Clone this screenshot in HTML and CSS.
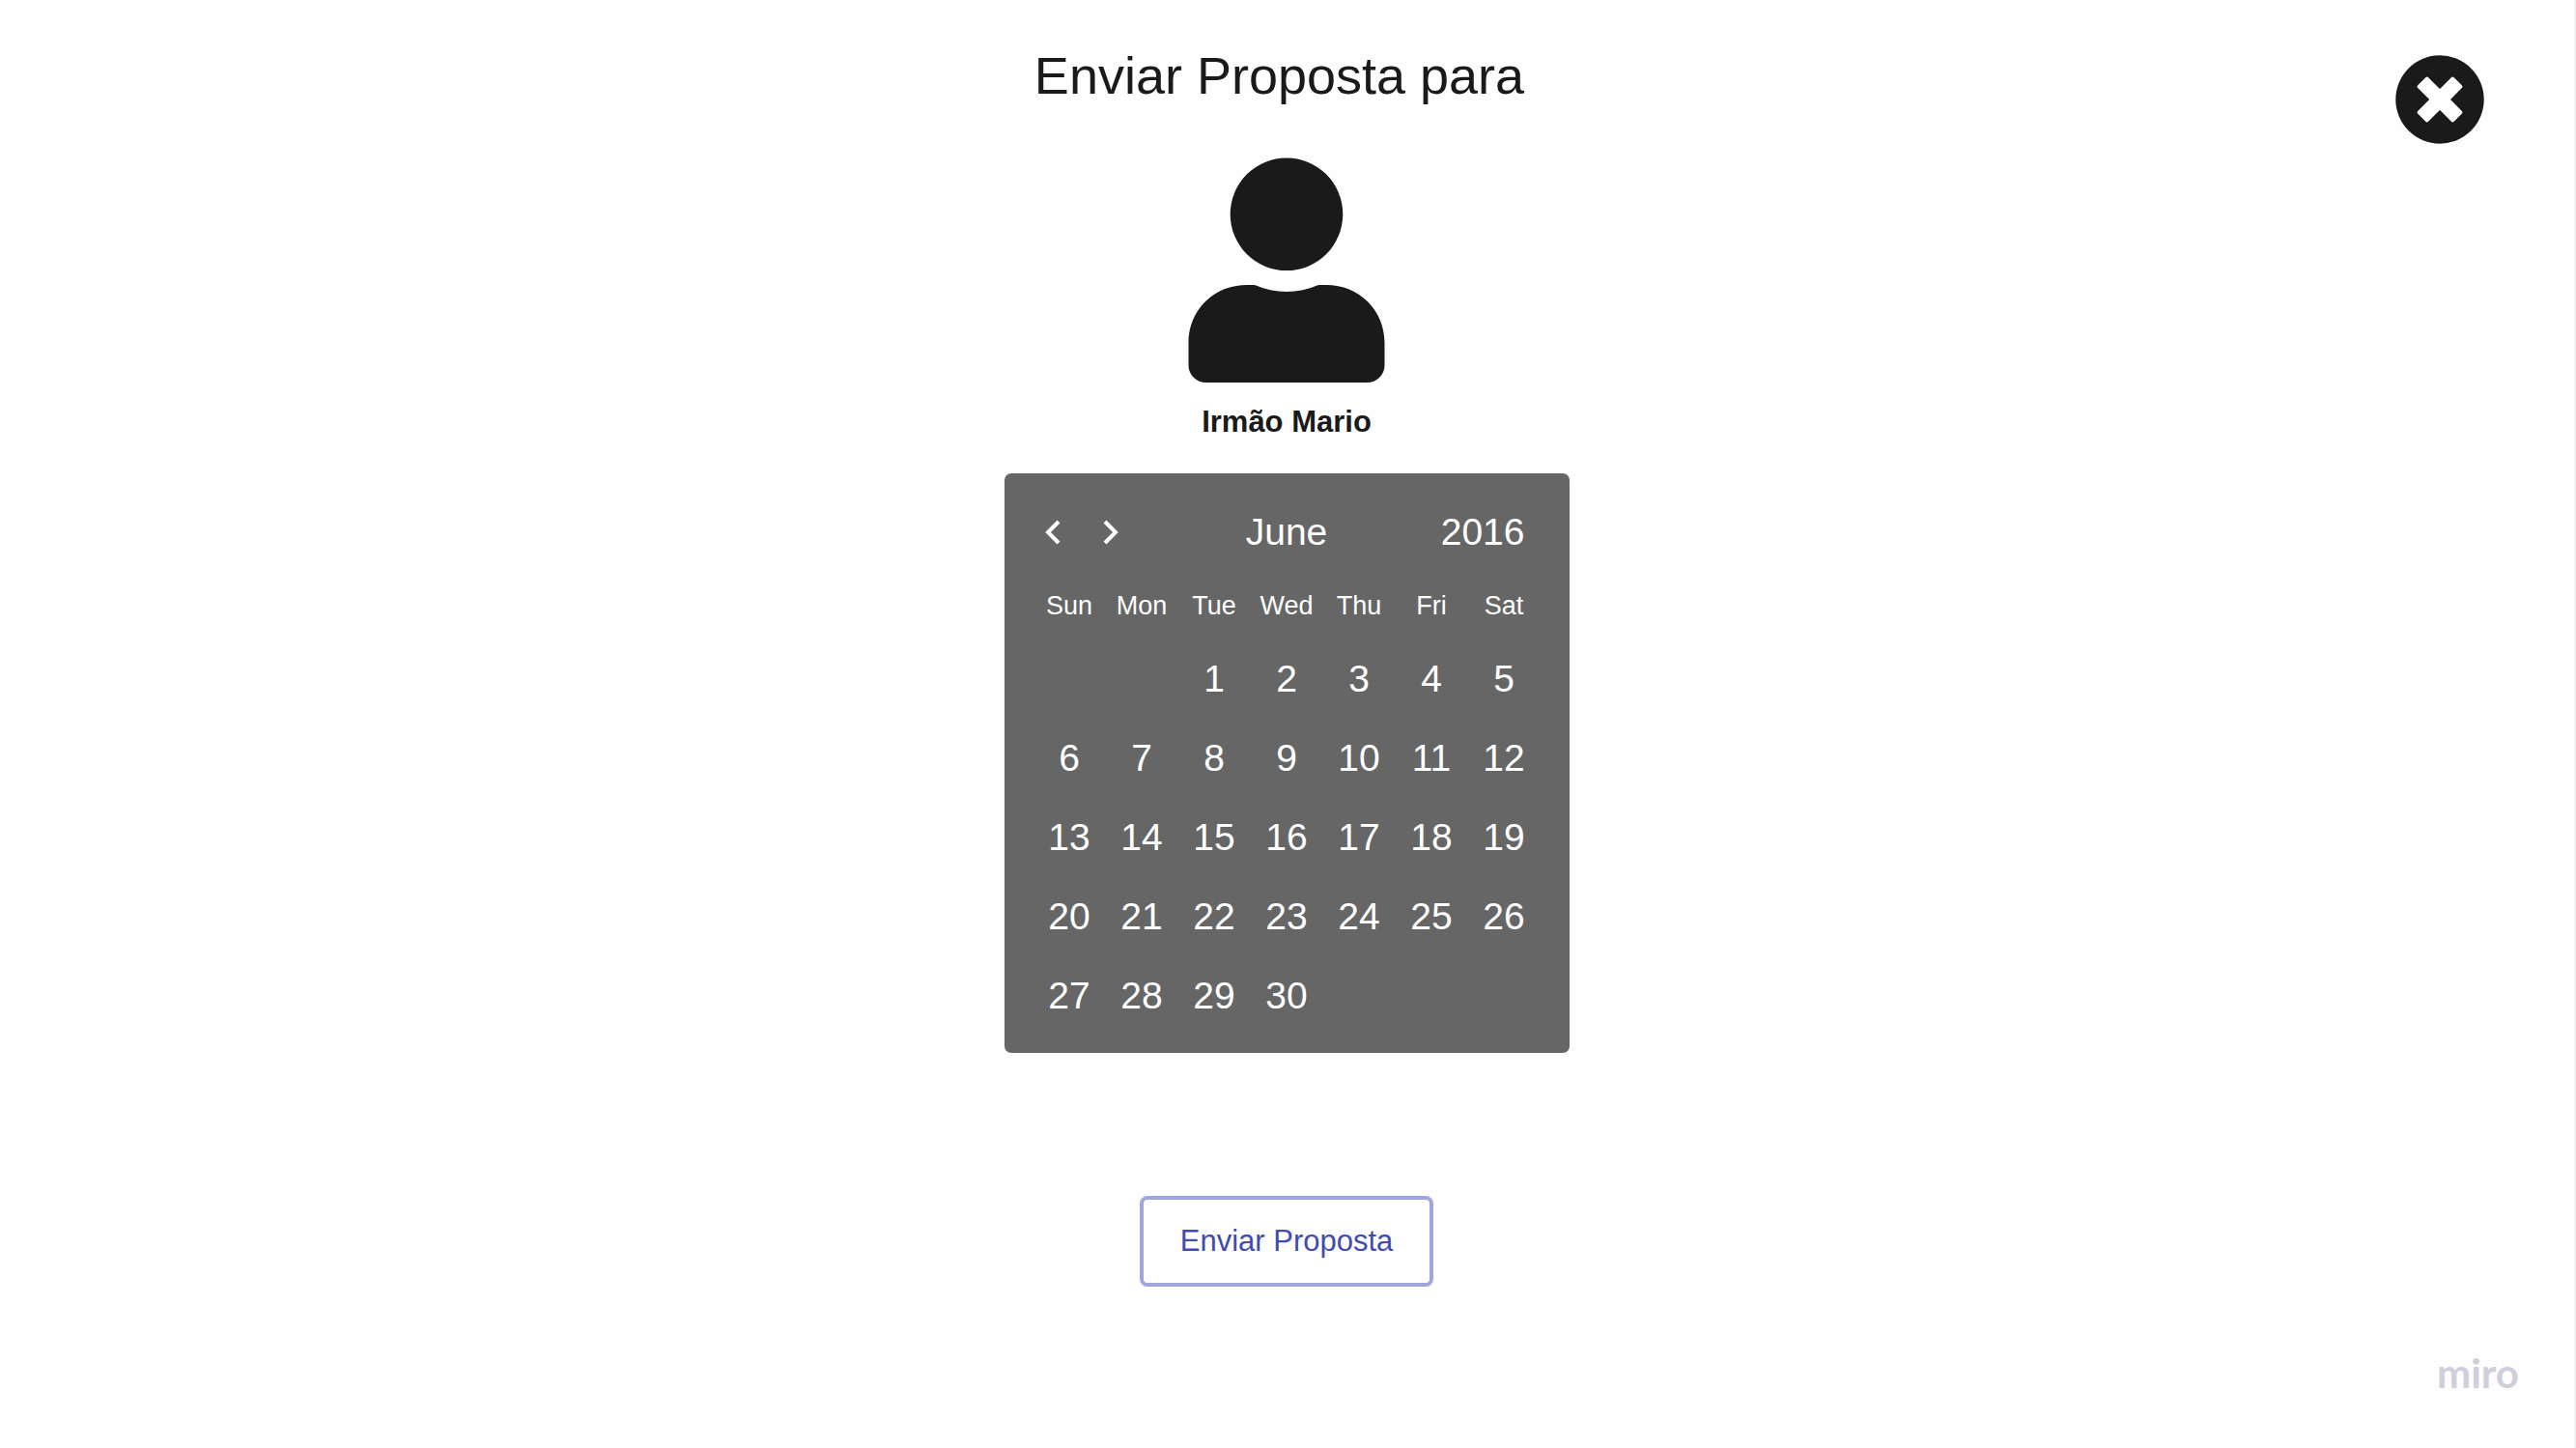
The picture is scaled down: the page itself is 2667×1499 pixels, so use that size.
FILE: index.html
```html
<!DOCTYPE html>
<html lang="pt">
<head>
<meta charset="utf-8">
<meta name="viewport" content="width=device-width, initial-scale=1">
<title>Enviar Proposta</title>
<link rel="stylesheet" href="styles.css">
</head>
<body>
<div class="page">
  <main class="proposal">
    <h1 class="title">Enviar Proposta para </h1>
    <svg class="avatar" viewBox="0 0 204 234" aria-hidden="true">
      <circle cx="102" cy="58.8" r="58.3"/>
      <path d="M0.500 192C0.500 158 27 132 61 132H69C90 141.300 114 141.300 135 132H143C177 132 203.500 158 203.500 192V215A18 18 0 0 1 185.500 233H18.500A18 18 0 0 1 0.500 215Z"/>
    </svg>
    <p class="name">Irmão Mario</p>

    <section class="calendar" aria-label="June 2016">
      <div class="calendar-head">
        <div class="arrows">
          <button class="arrow" type="button" aria-label="Previous month">
            <svg viewBox="0 0 16 26" aria-hidden="true"><path d="M14 2L3 13L14 24"/></svg>
          </button>
          <button class="arrow" type="button" aria-label="Next month">
            <svg viewBox="0 0 16 26" aria-hidden="true"><path d="M2 2L13 13L2 24"/></svg>
          </button>
        </div>
        <span class="month">June</span>
        <span class="year">2016</span>
      </div>
      <table class="days">
        <thead>
          <tr><th scope="col">Sun</th><th scope="col">Mon</th><th scope="col">Tue</th><th scope="col">Wed</th><th scope="col">Thu</th><th scope="col">Fri</th><th scope="col">Sat</th></tr>
        </thead>
        <tbody>
          <tr><td></td><td></td><td><button class="day" type="button">1</button></td><td><button class="day" type="button">2</button></td><td><button class="day" type="button">3</button></td><td><button class="day" type="button">4</button></td><td><button class="day" type="button">5</button></td></tr>
          <tr><td><button class="day" type="button">6</button></td><td><button class="day" type="button">7</button></td><td><button class="day" type="button">8</button></td><td><button class="day" type="button">9</button></td><td><button class="day" type="button">10</button></td><td><button class="day" type="button">11</button></td><td><button class="day" type="button">12</button></td></tr>
          <tr><td><button class="day" type="button">13</button></td><td><button class="day" type="button">14</button></td><td><button class="day" type="button">15</button></td><td><button class="day" type="button">16</button></td><td><button class="day" type="button">17</button></td><td><button class="day" type="button">18</button></td><td><button class="day" type="button">19</button></td></tr>
          <tr><td><button class="day" type="button">20</button></td><td><button class="day" type="button">21</button></td><td><button class="day" type="button">22</button></td><td><button class="day" type="button">23</button></td><td><button class="day" type="button">24</button></td><td><button class="day" type="button">25</button></td><td><button class="day" type="button">26</button></td></tr>
          <tr><td><button class="day" type="button">27</button></td><td><button class="day" type="button">28</button></td><td><button class="day" type="button">29</button></td><td><button class="day" type="button">30</button></td><td></td><td></td><td></td></tr>
        </tbody>
      </table>
    </section>

    <button class="send" type="submit">Enviar Proposta</button>
  </main>

  <button class="close" type="button" aria-label="Fechar">
    <svg viewBox="0 0 92 92" aria-hidden="true">
      <circle class="disc" cx="46" cy="46" r="45.700"/>
      <g class="cross" transform="rotate(45 46 46)">
        <rect x="19.500" y="38.300" width="53" height="15.400" rx="2"/>
        <rect x="38.300" y="19.500" width="15.400" height="53" rx="2"/>
      </g>
    </svg>
  </button>

  <footer class="brand">miro</footer>
</div>
</body>
</html>
```
FILE: styles.css
```css
* {
  box-sizing: border-box;
}

body {
  margin: 0;
  background: #fefefe;
  color: #1a1a1a;
  font-family: "Liberation Sans", Arial, sans-serif;
}

button {
  margin: 0;
  padding: 0;
  border: 0;
  background: none;
  color: inherit;
  font: inherit;
  cursor: pointer;
}

svg {
  display: block;
}

.page {
  display: grid;
  grid-template-columns: 1fr auto 1fr;
  grid-template-rows: auto 1fr;
  min-height: 100vh;
  padding-right: 1px;
  border-right: 2px solid #f2f2f2;
}

.proposal {
  grid-column: 2;
  grid-row: 1;
  display: flex;
  flex-direction: column;
  align-items: center;
  padding-top: 46px;
}

.title {
  margin: 0;
  font-size: 54px;
  font-weight: 400;
  line-height: 64px;
  white-space: pre;
}

.avatar {
  width: 204px;
  height: 234px;
  margin-top: 53px;
  fill: #1a1a1a;
}

.name {
  margin: 20px 0 33px;
  font-size: 31px;
  font-weight: 700;
  line-height: 40px;
}

.calendar {
  padding: 20px 30px 18px;
  border-radius: 7px;
  background: #666;
  color: #fff;
  font-size: 39px;
}

.calendar-head {
  display: grid;
  grid-template-columns: 1fr auto 1fr;
  align-items: center;
  height: 82px;
}

.arrows {
  display: flex;
  gap: 20px;
}

.arrow {
  display: grid;
  place-items: center;
  width: 40px;
  height: 40px;
}

.arrow svg {
  width: 16px;
  height: 26px;
  fill: none;
  stroke: #fff;
  stroke-width: 4;
}

.year {
  padding-right: 16px;
  text-align: right;
}

.days {
  border-collapse: collapse;
  table-layout: fixed;
  width: 525px;
}

.days th {
  height: 70px;
  padding: 0;
  font-size: 27px;
  font-weight: 400;
}

.days td {
  height: 82px;
  padding: 0;
}

.day {
  display: block;
  width: 100%;
  height: 82px;
}

.send {
  margin-top: 148px;
  width: 304px;
  height: 94px;
  border: 4px solid #a0a5dc;
  border-radius: 8px;
  color: #414bb2;
  font-size: 31px;
}

.close {
  grid-column: 3;
  grid-row: 1;
  place-self: start end;
  width: 92px;
  height: 92px;
  margin: 57px 92px 0 0;
}

.close .disc {
  fill: #1a1a1a;
}

.close .cross {
  fill: #fff;
}

.brand {
  grid-column: 1 / -1;
  grid-row: 2;
  align-self: end;
  padding: 0 56px 54px 0;
  color: #d0cedb;
  font-family: Lato, sans-serif;
  font-size: 42px;
  font-weight: 700;
  line-height: 48px;
  text-align: right;
}
```
